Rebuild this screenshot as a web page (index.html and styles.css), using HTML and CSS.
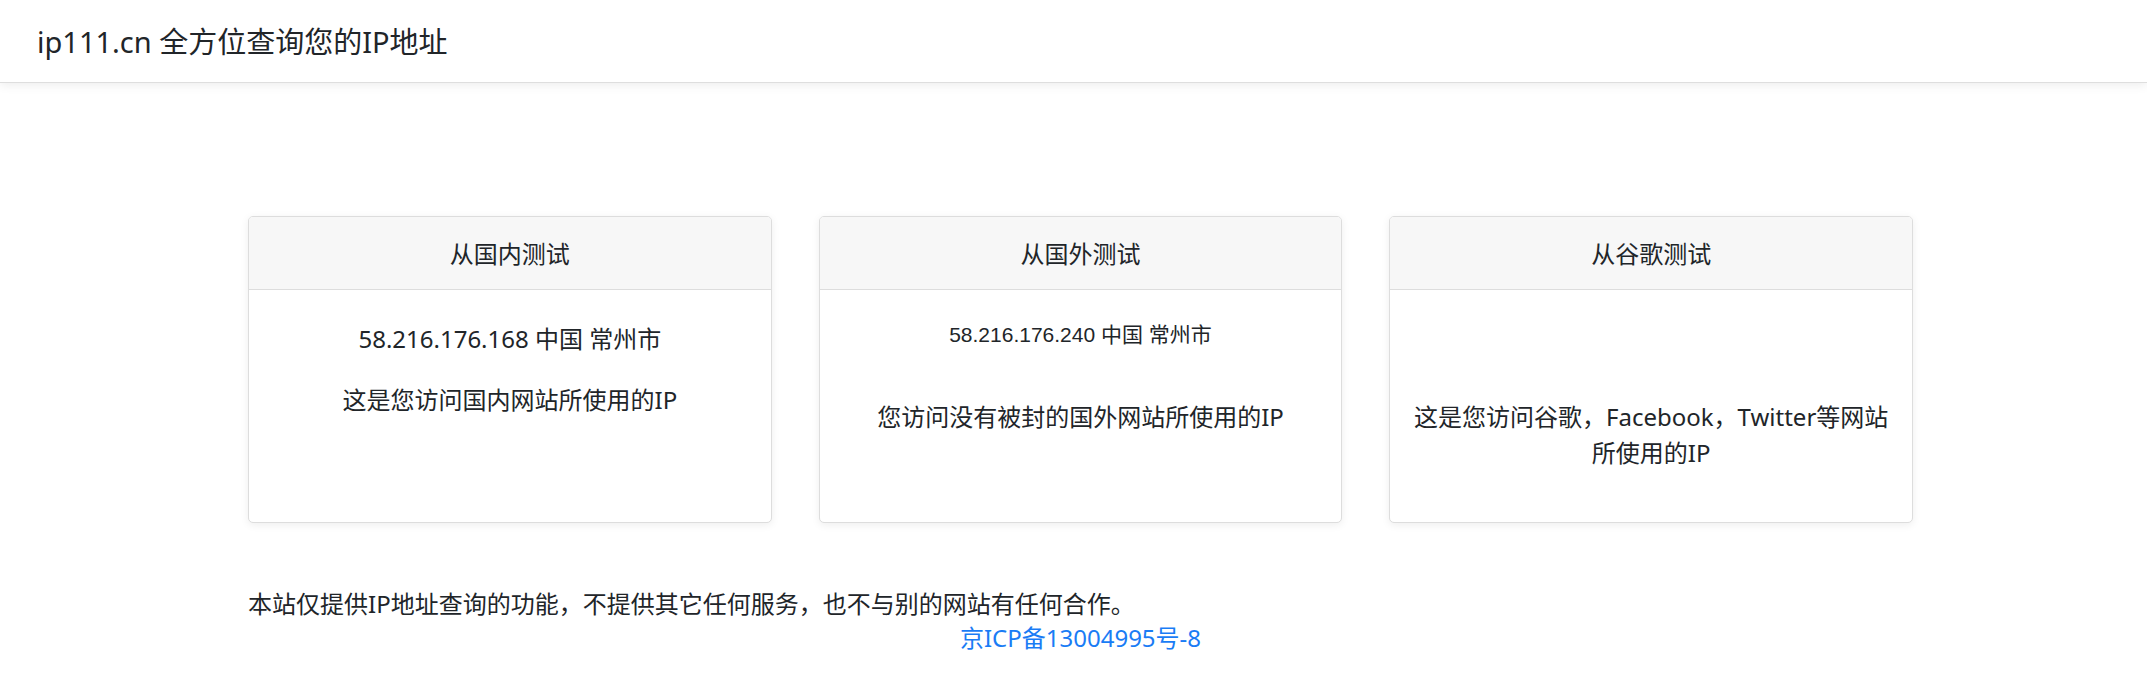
FILE: index.html
```html
<!DOCTYPE html>
<html lang="zh-CN">
<head>
<meta charset="utf-8">
<title>ip111.cn 全方位查询您的IP地址</title>
<link rel="stylesheet" href="styles.css">
</head>
<body>
<header class="navbar">
  <span class="brand">ip111.cn 全方位查询您的IP地址</span>
</header>
<main class="main">
  <section class="cards">
    <div class="card">
      <div class="card-header">从国内测试</div>
      <div class="card-body">
        <div class="ip ip-cn">58.216.176.168 中国 常州市</div>
        <p class="desc">这是您访问国内网站所使用的IP</p>
      </div>
    </div>
    <div class="card">
      <div class="card-header">从国外测试</div>
      <div class="card-body">
        <div class="ip ip-frame">58.216.176.240 中国 常州市</div>
        <p class="desc">您访问没有被封的国外网站所使用的IP</p>
      </div>
    </div>
    <div class="card">
      <div class="card-header">从谷歌测试</div>
      <div class="card-body">
        <div class="ip ip-frame"></div>
        <p class="desc">这是您访问谷歌，Facebook，Twitter等网站所使用的IP</p>
      </div>
    </div>
  </section>
  <p class="note">本站仅提供IP地址查询的功能，不提供其它任何服务，也不与别的网站有任何合作。</p>
  <p class="icp"><a href="#">京ICP备13004995号-8</a></p>
</main>
</body>
</html>
```
FILE: styles.css
```css
* { box-sizing: border-box; }
html, body { margin: 0; padding: 0; background: #fff; }
body {
  font-family: "Noto Sans", "Noto Sans CJK SC", sans-serif;
  color: #212529;
  font-size: 24px;
  line-height: 1.5;
}
.navbar {
  height: 83px;
  display: flex;
  align-items: center;
  padding-left: 37px;
  border-bottom: 1px solid #dedede;
  box-shadow: 0 2px 10px rgba(0, 0, 0, 0.08);
  background: #fff;
}
.brand {
  font-size: 29px;
  color: #212529;
  line-height: 1;
}
.main {
  width: 1913px;
  padding: 133px 0 0 248px;
}
.cards {
  display: grid;
  grid-template-columns: repeat(3, 1fr);
  column-gap: 47px;
}
.card {
  height: 307px;
  border: 1px solid #dddddd;
  border-radius: 5px;
  background: #fff;
  box-shadow: 0 2px 8px rgba(0, 0, 0, 0.07);
  overflow: hidden;
  display: flex;
  flex-direction: column;
}
.card-header {
  height: 73px;
  background: #f7f7f7;
  border-bottom: 1px solid #dddddd;
  text-align: center;
  line-height: 74px;
  font-size: 24px;
  overflow: hidden;
}
.card-body {
  padding: 20px 20px;
  text-align: center;
}
.ip { margin: 0; }
.ip-cn {
  height: 60px;
  line-height: 58px;
}
.ip-frame {
  height: 77px;
  line-height: 50px;
  font-family: "Liberation Sans", "Noto Sans CJK SC", sans-serif;
  font-size: 21px;
}
.desc {
  margin: 12px 0 0;
  line-height: 36px;
}
.note {
  margin: 63px 0 0;
  line-height: 36px;
}
.icp {
  margin: -2px 0 0;
  text-align: center;
  line-height: 36px;
}
.icp a {
  color: #1a7cf5;
  text-decoration: none;
}
```
